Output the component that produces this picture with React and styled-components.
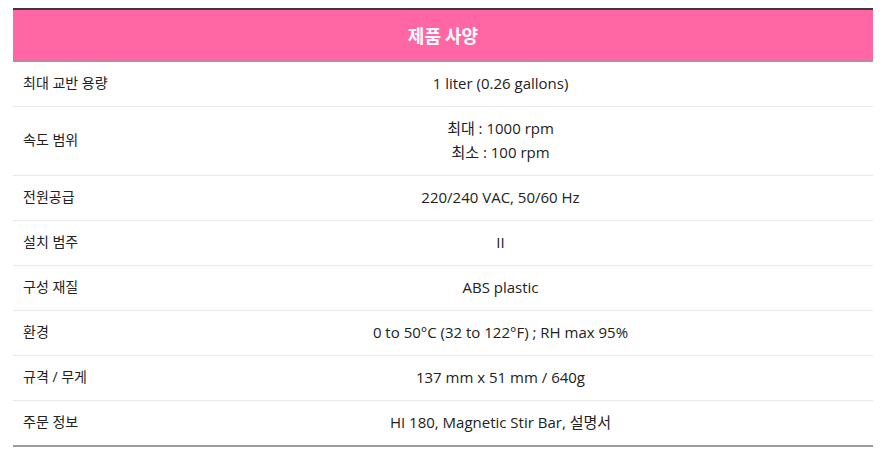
import React from "react";
import styled, { createGlobalStyle } from "styled-components";

const GlobalStyle = createGlobalStyle`
  html, body {
    margin: 0;
    padding: 0;
    background: #fff;
  }
  body {
    font-family: "Open Sans", "Noto Sans CJK KR", sans-serif;
    color: #222;
  }
`;

const Wrapper = styled.div`
  padding: 8px 13px 0 13px;
`;

const Table = styled.table`
  width: 860px;
  border-collapse: collapse;
  border-top: 2px solid #3a3a3a;
  border-bottom: 2px solid #9a9a9a;
  font-size: 15px;
`;

const HeadCell = styled.th`
  background: #ff66a3;
  color: #fff;
  font-family: "Noto Sans CJK KR", sans-serif;
  font-size: 18px;
  font-weight: 700;
  height: 50px;
  padding: 0;
  border-bottom: 2px solid #c9809f;
  text-align: center;
  vertical-align: middle;
`;

const Row = styled.tr`
  & + & td {
    border-top: 1px solid #e9e9e9;
  }
`;

const Label = styled.td`
  width: 105px;
  padding: 9px 0 11px 10px;
  line-height: 24px;
  font-size: 14px;
  text-align: left;
  vertical-align: middle;
  white-space: nowrap;
`;

const Value = styled.td`
  padding: 9px 0 11px 0;
  line-height: 24px;
  text-align: center;
  vertical-align: middle;
`;

const specs = [
  ["최대 교반 용량", ["1 liter (0.26 gallons)"]],
  ["속도 범위", ["최대 : 1000 rpm", "최소 : 100 rpm"]],
  ["전원공급", ["220/240 VAC, 50/60 Hz"]],
  ["설치 범주", ["II"]],
  ["구성 재질", ["ABS plastic"]],
  ["환경", ["0 to 50°C (32 to 122°F) ; RH max 95%"]],
  ["규격 / 무게", ["137 mm x 51 mm / 640g"]],
  ["주문 정보", ["HI 180, Magnetic Stir Bar, 설명서"]],
];

const App = () => {
  return (
    <Wrapper>
      <GlobalStyle />
      <Table>
        <thead>
          <tr>
            <HeadCell colSpan={2}>제품 사양</HeadCell>
          </tr>
        </thead>
        <tbody>
          {specs.map(([label, lines]) => (
            <Row key={label}>
              <Label>{label}</Label>
              <Value>
                {lines.map((line) => (
                  <div key={line}>{line}</div>
                ))}
              </Value>
            </Row>
          ))}
        </tbody>
      </Table>
    </Wrapper>
  );
};

export default App;
